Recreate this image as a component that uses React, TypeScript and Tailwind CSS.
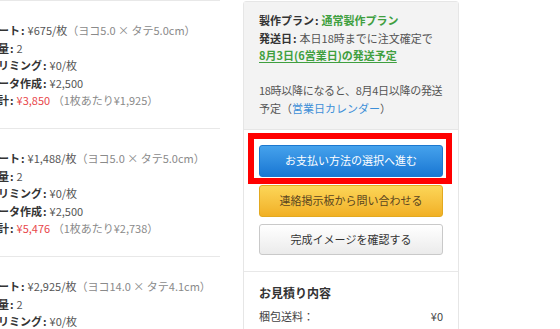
import type { ReactNode } from "react";

const FONT = { fontFamily: '"Noto Sans CJK JP", "Noto Sans", sans-serif' };

type Item = {
  label: string;
  value: ReactNode;
};

const BLOCKS: Item[][] = [
  [
    { label: "シート", value: <>¥675/枚<Note>（ヨコ5.0 × タテ5.0cm）</Note></> },
    { label: "数量", value: "2" },
    { label: "トリミング", value: "¥0/枚" },
    { label: "データ作成", value: "¥2,500" },
    { label: "合計", value: <><span className="text-[#e8464a]">¥3,850</span><Note> （1枚あたり¥1,925）</Note></> },
  ],
  [
    { label: "シート", value: <>¥1,488/枚<Note>（ヨコ5.0 × タテ5.0cm）</Note></> },
    { label: "数量", value: "2" },
    { label: "トリミング", value: "¥0/枚" },
    { label: "データ作成", value: "¥2,500" },
    { label: "合計", value: <><span className="text-[#e8464a]">¥5,476</span><Note> （1枚あたり¥2,738）</Note></> },
  ],
  [
    { label: "シート", value: <>¥2,925/枚<Note>（ヨコ14.0 × タテ4.1cm）</Note></> },
    { label: "数量", value: "2" },
    { label: "トリミング", value: "¥0/枚" },
  ],
];

function Note({ children }: { children: ReactNode }) {
  return <span className="text-[#8a8a8a]">{children}</span>;
}

function Colon() {
  return <span className="ml-px mr-[3px]">:</span>;
}

function OrderBlock({ items }: { items: Item[] }) {
  return (
    <div className="h-[128px] border-t border-[#e8e8e8] pt-[21px]">
      <div className="-ml-[13px] whitespace-nowrap">
        {items.map((it) => (
          <div key={it.label} className="text-[#555]">
            <b className="text-[#333]">
              {it.label}
              <Colon />
            </b>
            {it.value}
          </div>
        ))}
      </div>
    </div>
  );
}

export default function App() {
  return (
    <div
      className="relative h-[329px] w-[560px] overflow-hidden bg-white text-[11px] leading-[17.5px]"
      style={FONT}
    >
      <div className="flex">
        <div className="w-[220px] shrink-0">
          {BLOCKS.map((b, i) => (
            <OrderBlock key={i} items={b} />
          ))}
        </div>

        <div className="ml-[23px] mt-px h-[340px] w-[216px] shrink-0 rounded-t-[3px] border border-[#e6e6e6]">
          <div className="h-[128px] whitespace-nowrap border-b border-[#e6e6e6] bg-[#f3f3f3] px-[15px] pt-[10px] text-[#555]">
            <div>
              <b className="text-[#333]">
                製作プラン
                <Colon />
              </b>
              <b className="text-[#3f9f3f]">通常製作プラン</b>
            </div>
            <div>
              <b className="text-[#333]">
                発送日
                <Colon />
              </b>
              本日18時までに注文確定で
            </div>
            <div>
              <b className="text-[#3f9f3f] underline underline-offset-2">
                8月3日(6営業日)の発送予定
              </b>
            </div>
            <div className="mt-[17.5px] tracking-[-0.3px]">18時以降になると、8月4日以降の発送</div>
            <div>
              予定（<span className="text-[#3d8fd8]">営業日カレンダー</span>）
            </div>
          </div>

          <div className="flex flex-col border-b border-[#e8e8e8] px-[15px] pb-[16px] pt-[15px]">
            <button className="h-[32px] rounded-[3px] border border-[#1c78cf] bg-gradient-to-b from-[#45a2ec] to-[#1877d3] text-white">
              お支払い方法の選択へ進む
            </button>
            <button className="mt-[8px] h-[32px] rounded-[3px] border border-[#e3a91f] bg-gradient-to-b from-[#fcd657] to-[#f1b023] text-[#5a4520]">
              連絡掲示板から問い合わせる
            </button>
            <button className="mt-[7px] h-[31px] rounded-[3px] border border-[#c9c9c9] bg-gradient-to-b from-white to-[#ebebeb] text-[#333]">
              完成イメージを確認する
            </button>
          </div>

          <div className="px-[15px] pt-[12px] text-[#444]">
            <div className="mb-[6px] text-[12px] font-bold text-[#333]">お見積り内容</div>
            <div className="flex justify-between">
              <span>梱包送料：</span>
              <span>¥0</span>
            </div>
          </div>
        </div>
      </div>

      {/* red annotation frame */}
      <div className="absolute left-[248px] top-[133px] h-[51px] w-[204px] border-[6px] border-[#ff0000]" />
    </div>
  );
}
